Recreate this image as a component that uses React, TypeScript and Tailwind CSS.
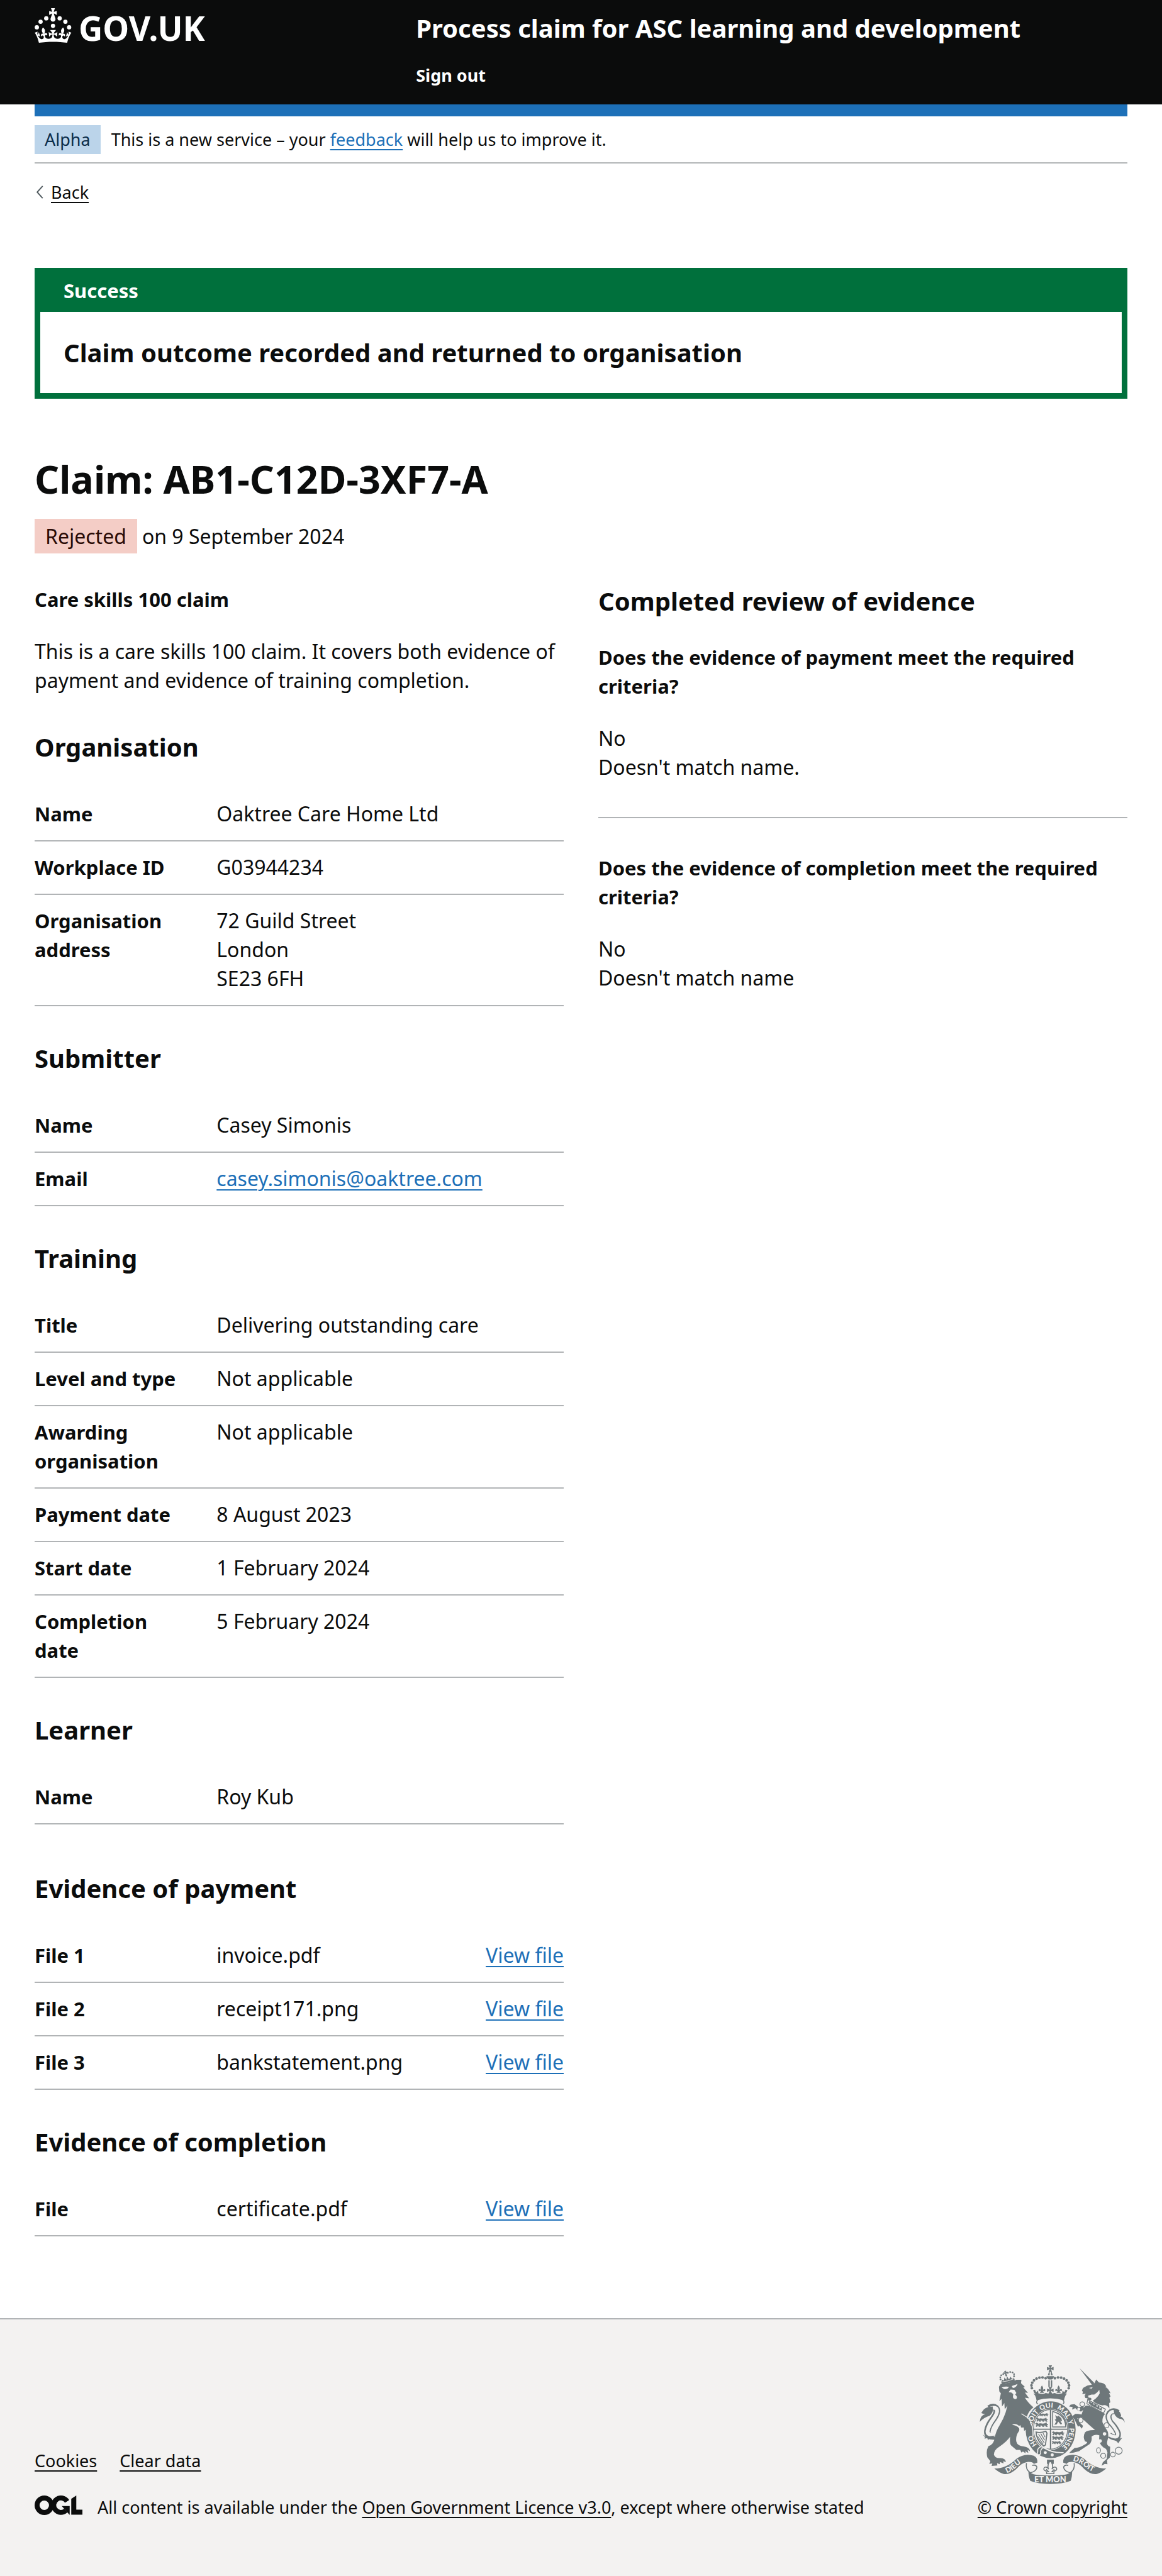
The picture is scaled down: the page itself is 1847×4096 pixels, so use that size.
import type { ReactNode } from "react";

const LINK =
  "text-[#1d70b8] underline decoration-2 underline-offset-[5px] hover:text-[#003078]";
const DARK_LINK = "text-[#0b0c0c] underline decoration-2 underline-offset-[5px]";

type Row = { label: string; value: ReactNode; action?: boolean };

function CrownIcon() {
  return (
    <svg viewBox="0 0 64 60" className="h-[55px] w-[59px] shrink-0" fill="currentColor" aria-hidden="true">
      <circle cx="20" cy="17.6" r="3.7" />
      <circle cx="10.2" cy="23.5" r="3.7" />
      <circle cx="3.7" cy="33.2" r="3.7" />
      <circle cx="31.7" cy="30.6" r="3.7" />
      <circle cx="43.3" cy="17.6" r="3.7" />
      <circle cx="53.2" cy="23.5" r="3.7" />
      <circle cx="59.7" cy="33.2" r="3.7" />
      <path d="M33.1,9.8c.2-.1.3-.3.5-.5l4.6,2.4v-6.8l-4.6,1.5c-.1-.2-.3-.3-.5-.5l1.9-5.9h-6.7l1.9,5.9c-.2.1-.3.3-.5.5l-4.6-1.5v6.8l4.6-2.4c.1.2.3.3.5.5l-2.6,8c-.9,2.8,1.2,5.7,4.1,5.7h0c3,0,5.1-2.9,4.1-5.7l-2.6-8ZM37,37.9s-3.4,3.8-4.1,6.1c2.2,0,4.2-.5,6.4-2.8l-.7,8.5c-2-2.8-4.4-4.1-5.7-3.8.1,3.1.5,6.7,5.8,7.2,3.7.3,6.7-1.5,7-3.8.4-2.6-2-4.3-3.7-1.6-1.4-4.5,2.4-6.1,4.9-3.2-1.9-4.5-1.8-7.7,2.4-10.9,3,4,2.6,7.3-1.2,11.1,2.4-1.3,6.2,0,4,4.6-1.2-2.8-3.7-2.2-4.2.2-.3,1.7.7,3.7,3,4.2,1.9.3,4.7-.9,7-5.9-1.3,0-2.4.7-3.9,1.7l2.4-8c.6,2.3,1.4,3.7,2.2,4.5.6-1.6.5-2.8,0-5.3l5,1.8c-2.6,3.6-5.2,8.7-7.3,17.5-7.4-1.1-15.7-1.7-24.5-1.7h0c-8.8,0-17.1.6-24.5,1.7-2.1-8.9-4.7-13.9-7.3-17.5l5-1.8c-.5,2.5-.6,3.7,0,5.3.8-.8,1.6-2.3,2.2-4.5l2.4,8c-1.5-1-2.6-1.7-3.9-1.7,2.3,5,5.2,6.2,7,5.9,2.3-.4,3.3-2.4,3-4.2-.5-2.4-3-3.1-4.2-.2-2.2-4.6,1.6-6,4-4.6-3.7-3.7-4.2-7.1-1.2-11.1,4.2,3.2,4.3,6.4,2.4,10.9,2.5-2.8,6.3-1.3,4.9,3.2-1.8-2.7-4.1-1-3.7,1.6.3,2.3,3.3,4.1,7,3.8,5.4-.5,5.7-4.2,5.8-7.2-1.3-.2-3.7,1-5.7,3.8l-.7-8.5c2.2,2.3,4.2,2.7,6.4,2.8-.7-2.3-4.1-6.1-4.1-6.1h10.6Z" />
    </svg>
  );
}

function LicenceLogo() {
  return (
    <svg viewBox="0 0 484 196" className="h-[31px] w-[76px] shrink-0" role="img" aria-label="Open Government Licence">
      <g fill="none" stroke="#0b0c0c" strokeWidth="50">
        <circle cx="98" cy="98" r="73" />
        <path d="M329 59A73 73 0 1 0 316 151" />
      </g>
      <path fill="#0b0c0c" d="M275 106h80v88h-3zM371 32L422 0v143h62v51H371z" />
    </svg>
  );
}

/* A cross pattée centred on (0,0), 34 units across. */
const CROSS = "M-9-17H9L3-3 17-9V9L3 3 9 17H-9L-3 3-17 9V-9L-3-3z";
const FLEUR =
  "M0-19Q9-8 4 4 8-4 14-1 19 5 11 9L9 5 4 11H9V16H-9V11H-4L-9 5-11 9Q-19 5-14-1-8-4-4 4-9-8 0-19z";
const PEARLS: [number, number][] = [
  [413, 162], [397, 158], [381, 159], [366, 164], [353, 173], [344, 185], [340, 199], [342, 213],
];
const LION_PEARLS: [number, number][] = [
  [180, 168], [179, 157], [184, 147], [194, 141], [218, 134], [230, 130], [242, 132], [250, 141], [250, 152], [210, 148],
];

/* One walking lion, used six times on the shield. */
const WALKING_LION =
  "M-31-5L-24-9-17-4-8-6 4-4 14-6 21-10 22-3 29-1 22 2 26 9H19L15 3 7 3 10 9H3L-1 3-10 3-7 9H-14L-18 2-24 9-29 7-24 0z";
const LION_PLACES: [number, number, number][] = [
  [404, 350, 0.8], [395, 376, 1], [394, 402, 1.1], [479, 446, 1.05], [477, 470, 1], [470, 494, 0.8],
];

function RoyalArms() {
  return (
    <svg viewBox="72 96 750 612" className="h-[189px] w-[231px]" fill="#6e777a" aria-hidden="true">
      <defs>
        <path id="garter" d="M438 538A97 112 0 0 1 438 314A97 112 0 0 1 438 538" />
        <path id="scroll-left" d="M204 654Q240 644 268 614Q296 590 336 588" />
        <path id="scroll-right" d="M550 588Q588 594 612 616Q640 642 690 656" />
      </defs>

      {/* Crown */}
      <path transform="translate(437 112)" d={CROSS} />
      <path d="M430 129h14l6 17h-26zM417 151h40q-4 14-12 17h-16q-8-3-12-17z" />
      <path d="M434 130h6v18h-6z" fill="#f3f2f1" />
      <path d="M427 172h7v34h-7zM440 172h7v34h-7z" />
      {PEARLS.map(([x, y]) => (
        <g key={x}>
          <circle cx={x} cy={y} r="7" />
          <circle cx={874 - x} cy={y} r="7" />
        </g>
      ))}
      <path transform="translate(437 224)" d={CROSS} />
      <path transform="translate(394 220) scale(1.1)" d={FLEUR} />
      <path transform="translate(480 220) scale(1.1)" d={FLEUR} />
      <path d="M348 224l10-3 6 13 10-8 2 18-12 2q-12-8-16-22zM526 224l-10-3-6 13-10-8-2 18 12 2q12-8 16-22z" />
      <path d="M350 240Q365 248 372 240Q405 246 413 238Q437 244 461 238Q469 246 502 240Q509 248 524 240Q510 256 508 276Q437 256 366 276Q364 256 350 240z" />
      <path
        d="M374 272Q358 286 374 296Q437 274 500 296Q516 286 500 272"
        fill="none"
        stroke="#6e777a"
        strokeWidth="5"
      />

      {/* Lion's tail */}
      <path d="M152 462Q110 466 112 436Q116 408 140 376Q172 334 156 316Q142 304 122 318" fill="none" stroke="#6e777a" strokeWidth="34" />
      <path d="M168 450Q112 462 113 436Q118 408 141 376Q172 334 158 318Q146 308 112 326" fill="none" stroke="#f3f2f1" strokeWidth="20" />
      <path d="M73 387Q76 354 102 346Q74 344 84 336Q98 308 140 308Q146 338 124 356Q96 364 73 387z" />
      <path d="M88 452L104 464 150 458 138 470Q122 470 116 482L112 470 98 474 100 466z" />

      {/* Lion */}
      <path d="M172 206L182 190Q234 188 262 170H288L286 188 306 206 298 210 322 237 306 236 328 266 306 262Q322 288 350 312Q324 332 316 362L320 400 300 416 287 416 288 402 276 408Q258 392 240 402Q284 410 276 434Q256 462 262 490Q268 512 300 514Q330 518 332 538L320 532 324 548 308 538 310 550 296 540 288 546 282 532 262 532 236 510Q226 500 230 464Q212 490 176 514Q146 532 146 556Q152 576 180 574Q206 576 208 594L194 590 196 602 178 594 176 606 162 600 164 612 134 615 138 602 122 604 128 590 112 570Q104 536 118 512Q146 504 150 470Q156 436 176 404Q196 370 206 340L216 304 202 322 200 290 188 308 186 268 174 280 182 240 174 230z" />
      <path fill="#f3f2f1" d="M186 210Q200 202 224 206Q214 222 196 216zM238 202L268 192Q262 212 244 212zM222 234L232 220 252 222 262 238 256 246Q270 258 262 268Q250 274 244 260L246 244 236 236z" />
      <path d="M182 180L252 164 254 178 190 192z" />
      <path d="M190 186Q216 184 246 172L250 158 240 166 232 154 224 168 214 152 210 170 200 158 198 174 186 168z" />
      <path transform="translate(206 134) rotate(-14) scale(.6)" d={CROSS} />
      {LION_PEARLS.map(([x, y]) => (
        <circle key={`${x}-${y}`} cx={x} cy={y} r="4.5" />
      ))}
      <path d="M190 180Q218 178 246 166" fill="none" stroke="#f3f2f1" strokeWidth="3" />

      {/* Garter and shield */}
      <ellipse cx="439" cy="428" rx="134" ry="152" fill="#f3f2f1" />
      <ellipse cx="439" cy="428" rx="129" ry="147" />
      <ellipse cx="438" cy="426" rx="93" ry="107" fill="#f3f2f1" />
      <ellipse cx="438" cy="426" rx="88" ry="102" fill="none" stroke="#6e777a" strokeWidth="4" />
      <path d="M435 322h7v206h-7zM350 422h176v6H350z" />
      {LION_PLACES.map(([x, y, s]) => (
        <path key={y} transform={`translate(${x} ${y}) scale(${s})`} d={WALKING_LION} stroke="#6e777a" strokeWidth="2" />
      ))}
      <path d="M447 330V416H520Q522 348 447 330zM452 337V411H514Q512 354 452 337z" fillRule="evenodd" />
      <path d="M462 352l10 8 8-4 14 12 4 16-10-4 10 18-8 2-12-14-8 14-12 2 10-16-8-10 8-4z" />
      <path d="M364 440Q384 446 414 436L420 446 412 506 404 512Q378 496 366 458z" fill="none" stroke="#6e777a" strokeWidth="6" />
      <path d="M376 450l30 46M388 448l20 34M400 446l10 20M372 462l28 40" fill="none" stroke="#6e777a" strokeWidth="4" />
      <path d="M402 518Q440 548 506 546" fill="none" stroke="#f3f2f1" strokeWidth="6" />
      <path d="M372 530Q384 508 402 520Q384 528 388 548Q384 562 368 554Q374 546 372 530z" fill="#6e777a" stroke="#f3f2f1" strokeWidth="5" />
      <circle cx="411" cy="546" r="8" fill="#f3f2f1" />
      <circle cx="447" cy="558" r="8" fill="#f3f2f1" />
      <g fill="#f3f2f1" fontFamily="Lato" fontWeight="900" fontSize="35">
        <text><textPath href="#garter" startOffset="12%">HO</textPath></text>
        <text><textPath href="#garter" startOffset="28%">SOIT</textPath></text>
        <text><textPath href="#garter" startOffset="42%">QUI</textPath></text>
        <text><textPath href="#garter" startOffset="55%">MAL</textPath></text>
        <text><textPath href="#garter" startOffset="68%">Y</textPath></text>
        <text><textPath href="#garter" startOffset="74%">PENSE</textPath></text>
      </g>
      {/* Lion's arm over the garter */}
      <path d="M290 350L316 366Q332 382 334 398Q346 420 343 458L334 442 327 456 320 438 312 444 312 426 302 434 300 414 286 416 280 390z" />
      <path d="M288 345L318 364Q335 380 338 397Q350 420 347 462" fill="none" stroke="#f3f2f1" strokeWidth="4" />

      {/* Unicorn's tail */}
      <path d="M742 456Q790 486 786 446Q776 418 748 390Q726 354 750 336Q766 326 786 340" fill="none" stroke="#6e777a" strokeWidth="30" />
      <path d="M726 446Q790 484 785 446Q775 420 748 390Q727 355 751 337Q768 328 790 346" fill="none" stroke="#f3f2f1" strokeWidth="17" />
      <path d="M822 392Q814 370 792 370Q766 360 764 326Q792 322 800 346Q806 360 798 358Q818 366 822 392z" />
      <path d="M752 470Q776 488 792 474L808 470 798 482 788 498 780 488z" />

      {/* Unicorn */}
      <path d="M588 110L664 186 654 198 646 188z" />
      <path d="M654 194L666 186 674 168 688 184Q716 184 726 204L720 206Q738 214 748 240L740 238 748 256 742 262 747 286 741 290 742 318Q728 296 706 302 672 296 656 278Q682 262 692 240L690 222Q680 238 664 246L650 246 632 252 636 266 618 264 614 252 620 242 602 244 606 232 600 226 606 212 628 200z" />
      <path d="M626 270L634 262 644 262 652 270 642 276z" />
      <path d="M630 272L722 322 712 342 626 294z" fill="#f3f2f1" stroke="#6e777a" strokeWidth="4" />
      <path d="M634 290L640 276 648 290 656 284 662 300 672 292 678 310 688 302 692 320 704 312 702 330 650 304z" />
      <path d="M612 310Q622 296 652 310L720 346Q704 362 706 388Q714 412 732 434Q742 452 730 492 728 510 746 516L744 572 730 584 732 606 718 604 702 614 708 596 728 578 732 546Q728 524 712 520Q684 500 690 456 664 450 650 464 654 486 640 502 598 530 586 538 562 546 534 548 546 536 562 522Q590 520 612 506 640 492 616 488 604 464 616 442 630 428 668 430 636 402 604 372L598 350z" />
      <path d="M612 322L596 334 580 330 566 316 550 324 552 310 534 308 542 298 562 296 584 312 608 306zM602 350L580 346 566 346 550 358 562 374 576 404 580 412 588 408 600 422 606 408 590 392 576 368 604 376z" />
      <g fill="none" stroke="#6e777a" strokeWidth="4">
        <circle cx="602" cy="296" r="12" fill="#f3f2f1" />
        <ellipse cx="594" cy="378" rx="12" ry="14" fill="#f3f2f1" />
        <circle cx="727" cy="405" r="13" fill="#f3f2f1" />
        <ellipse cx="686" cy="534" rx="10" ry="14" />
        <circle cx="710" cy="562" r="13" />
        <circle cx="760" cy="556" r="12" />
        <circle cx="790" cy="536" r="18" />
      </g>
      <g fill="#f3f2f1">
        <circle cx="584" cy="322" r="8" />
        <circle cx="717" cy="449" r="9" />
        <circle cx="694" cy="486" r="9" />
        <path d="M636 212L656 208 650 216z" />
      </g>

      {/* Pendant */}
      <path d="M420 582h35v22h-35z" />
      <path transform="translate(437 624) scale(2.1 1.9)" d={FLEUR} fill="#f3f2f1" stroke="#6e777a" strokeWidth="2.4" />

      {/* Scroll */}
      {["", "translate(874 0) scale(-1 1)"].map((t) => (
        <g key={t} transform={t}>
          <path d="M148 628Q212 628 262 578Q304 546 352 562Q374 574 370 598L352 604Q346 592 318 594Q288 598 262 630Q228 662 196 656Q176 652 148 628z" />
          <path d="M314 600Q308 634 334 650Q368 640 368 620Q362 606 344 612" fill="#f3f2f1" stroke="#6e777a" strokeWidth="5" />
        </g>
      ))}
      <path d="M324 638Q336 656 364 660Q437 668 510 660Q538 656 550 638Q550 672 542 692Q500 708 437 708Q374 708 334 692Q324 668 324 638z" />
      <g fill="#f3f2f1" fontFamily="Lato" fontWeight="900">
        <text fontSize="38"><textPath href="#scroll-left" startOffset="6%">DIEU</textPath></text>
        <text fontSize="38"><textPath href="#scroll-right" startOffset="2%">DROIT</textPath></text>
        <text x="437" y="698" fontSize="42" textAnchor="middle">ET MON</text>
      </g>
    </svg>
  );
}

function SummaryList({ title, rows, spaced = false }: { title: string; rows: Row[]; spaced?: boolean }) {
  return (
    <section className={spaced ? "mt-[74px]" : "mt-[55px]"}>
      <h2 className="mb-[38px] text-[40px] leading-[55px] font-bold">{title}</h2>
      <dl>
        {rows.map((row) => (
          <div key={row.label} className="flex border-b-2 border-[#b1b4b6] pt-[18px] pb-[19px]">
            <dt className="w-[34.4%] shrink-0 pr-[55px] text-[31px] font-bold">{row.label}</dt>
            <dd className="grow">{row.value}</dd>
            {row.action && (
              <dd>
                <a href="#view" className={LINK}>View file</a>
              </dd>
            )}
          </div>
        ))}
      </dl>
    </section>
  );
}

function Review({ question, comment }: { question: string; comment: string }) {
  return (
    <div>
      <h3 className="mb-[37px] text-[31px] font-bold">{question}</h3>
      <p>
        No
        <br />
        {comment}
      </p>
    </div>
  );
}

export default function App() {
  return (
    <div className="bg-white font-['Noto_Sans',sans-serif] text-[32px] leading-[46px] text-[#0b0c0c]">
      <header className="bg-[#0b0c0c] px-[55px] text-white">
        <div className="flex pb-7">
          <div className="w-[34.9%] pt-[13px]">
            <a href="#home" className="inline-flex items-start gap-[11px]">
              <CrownIcon />
              <span className="pt-1 text-[53px] leading-[55px] font-bold">GOV.UK</span>
            </a>
          </div>
          <div className="pt-[22px]">
            <a href="#service" className="block text-[40px] leading-[46px] font-bold">
              Process claim for ASC learning and development
            </a>
            <nav className="mt-[33px] text-[27px] leading-[37px] font-bold">
              <a href="#signout">Sign out</a>
            </nav>
          </div>
        </div>
      </header>

      <div className="px-[55px]">
        <div className="h-[19px] bg-[#1d70b8]" />
        <div className="flex items-center gap-[17px] border-b-2 border-[#b1b4b6] pt-[14px] pb-[13px] text-[27px]">
          <strong className="bg-[#bbd4ea] px-4 font-normal text-[#0c2d4a]">Alpha</strong>
          <span>
            This is a new service – your{" "}
            <a href="#feedback" className={LINK}>feedback</a> will help us to improve it.
          </span>
        </div>
        <a href="#back" className="mt-[27px] inline-flex items-center gap-[11px] text-[27px] leading-[37px]">
          <svg viewBox="0 0 15 22" className="h-[21px] w-[15px]" fill="none" stroke="#505a5f" strokeWidth="2" aria-hidden="true">
            <path d="M13 1L4 11l9 10" />
          </svg>
          <span className={DARK_LINK}>Back</span>
        </a>

        <main className="pt-[99px] pb-[130px]">
          <div role="alert" className="border-[9px] border-t-0 border-[#00703c]">
            <h2 className="bg-[#00703c] px-[37px] pt-[13px] pb-[11px] text-[31px] font-bold text-white">Success</h2>
            <p className="p-[37px] text-[40px] leading-[55px] font-bold">
              Claim outcome recorded and returned to organisation
            </p>
          </div>

          <h1 className="mt-[91px] text-[61px] leading-[74px] font-bold">Claim: AB1-C12D-3XF7-A</h1>
          <div className="mt-[26px] flex items-center gap-2">
            <strong className="bg-[#f4cdc6] px-[17px] leading-[55px] font-normal text-[#2a0b06]">Rejected</strong>
            <span>on 9 September 2024</span>
          </div>

          <div className="mt-[50px] grid grid-cols-2 gap-x-[55px]">
            <div>
              <h3 className="mb-[37px] text-[31px] font-bold">Care skills 100 claim</h3>
              <p>
                This is a care skills 100 claim. It covers both evidence of payment and evidence of training
                completion.
              </p>
              <SummaryList
                title="Organisation"
                rows={[
                  { label: "Name", value: "Oaktree Care Home Ltd" },
                  { label: "Workplace ID", value: "G03944234" },
                  {
                    label: "Organisation address",
                    value: (
                      <>
                        72 Guild Street
                        <br />
                        London
                        <br />
                        SE23 6FH
                      </>
                    ),
                  },
                ]}
              />
              <SummaryList
                title="Submitter"
                rows={[
                  { label: "Name", value: "Casey Simonis" },
                  {
                    label: "Email",
                    value: (
                      <a href="mailto:casey.simonis@oaktree.com" className={LINK}>
                        casey.simonis@oaktree.com
                      </a>
                    ),
                  },
                ]}
              />
              <SummaryList
                title="Training"
                rows={[
                  { label: "Title", value: "Delivering outstanding care" },
                  { label: "Level and type", value: "Not applicable" },
                  { label: "Awarding organisation", value: "Not applicable" },
                  { label: "Payment date", value: "8 August 2023" },
                  { label: "Start date", value: "1 February 2024" },
                  { label: "Completion date", value: "5 February 2024" },
                ]}
              />
              <SummaryList title="Learner" rows={[{ label: "Name", value: "Roy Kub" }]} />
              <SummaryList
                title="Evidence of payment"
                spaced
                rows={[
                  { label: "File 1", value: "invoice.pdf", action: true },
                  { label: "File 2", value: "receipt171.png", action: true },
                  { label: "File 3", value: "bankstatement.png", action: true },
                ]}
              />
              <SummaryList
                title="Evidence of completion"
                rows={[{ label: "File", value: "certificate.pdf", action: true }]}
              />
            </div>

            <div>
              <h2 className="mb-10 text-[40px] leading-[52px] font-bold">Completed review of evidence</h2>
              <Review
                question="Does the evidence of payment meet the required criteria?"
                comment="Doesn't match name."
              />
              <hr className="my-14 border-t-2 border-[#b1b4b6]" />
              <Review
                question="Does the evidence of completion meet the required criteria?"
                comment="Doesn't match name"
              />
            </div>
          </div>
        </main>
      </div>

      <footer className="flex items-end justify-between border-t-2 border-[#b1b4b6] bg-[#f3f2f1] px-[55px] pt-[73px] pb-[92px] text-[27px] leading-[37px]">
        <div>
          <nav className="flex gap-[36px]">
            <a href="#cookies" className={DARK_LINK}>Cookies</a>
            <a href="#clear" className={DARK_LINK}>Clear data</a>
          </nav>
          <div className="mt-[37px] flex items-start gap-6">
            <LicenceLogo />
            <span>
              All content is available under the{" "}
              <a href="#licence" className={DARK_LINK}>Open Government Licence v3.0</a>, except where otherwise
              stated
            </span>
          </div>
        </div>
        <a href="#copyright" className="flex flex-col items-center gap-[18px]">
          <RoyalArms />
          <span className={DARK_LINK}>© Crown copyright</span>
        </a>
      </footer>
    </div>
  );
}
